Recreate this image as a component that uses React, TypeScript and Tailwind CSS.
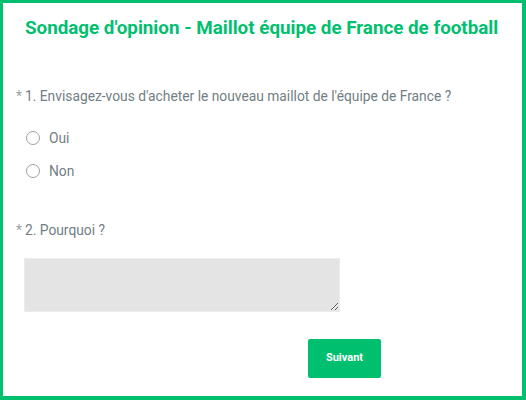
import React, { useState } from "react";

export default function App() {
  const [choice, setChoice] = useState<string>("");
  const [reason, setReason] = useState<string>("");

  return (
    <div
      className="w-[526px] h-[400px] bg-white border-[#00bf6f] border-t-[3px] border-l-[3px] border-r-4 border-b-4 flex flex-col"
      style={{ fontFamily: "Roboto, 'Liberation Sans', sans-serif" }}
    >
      <h1 className="pt-[13px] pl-[22px] text-[18.8px] leading-[24px] font-bold text-[#00bf6f]">
        Sondage d'opinion - Maillot équipe de France de football
      </h1>

      <div className="pt-[46px] pl-[13px] text-[13.8px] leading-[20px] text-[#727e84]">
        <span className="text-[#9aa3a8] mr-[3px]">*</span>1. Envisagez-vous d'acheter le nouveau maillot de l'équipe de France ?
      </div>

      <div className="flex flex-col gap-[19px] pt-[25px] pl-[23px]">
        {["Oui", "Non"].map((opt) => (
          <label key={opt} className="flex items-center gap-[9px] cursor-pointer">
            <span
              onClick={() => setChoice(opt)}
              className="w-[14px] h-[14px] rounded-full border border-[#9aa3a8] bg-white flex items-center justify-center"
            >
              {choice === opt && <span className="w-[7px] h-[7px] rounded-full bg-[#00bf6f]" />}
            </span>
            <span className="text-[13.8px] leading-[14px] text-[#727e84]">{opt}</span>
          </label>
        ))}
      </div>

      <div className="pt-[42px] pl-[13px] text-[13.8px] leading-[20px] text-[#727e84]">
        <span className="text-[#9aa3a8] mr-[3px]">*</span>2. Pourquoi ?
      </div>

      <div className="pt-[18px] pl-[21px]">
        <textarea
          value={reason}
          onChange={(e) => setReason(e.target.value)}
          className="block w-[316px] h-[54px] bg-[#e4e4e4] border border-[#ececec] outline-none"
        />
      </div>

      <div className="pt-[27px] pl-[305px]">
        <button className="w-[73px] h-[39px] rounded-[2px] bg-[#00bf6f] text-white text-[11px] font-bold">
          Suivant
        </button>
      </div>
    </div>
  );
}
